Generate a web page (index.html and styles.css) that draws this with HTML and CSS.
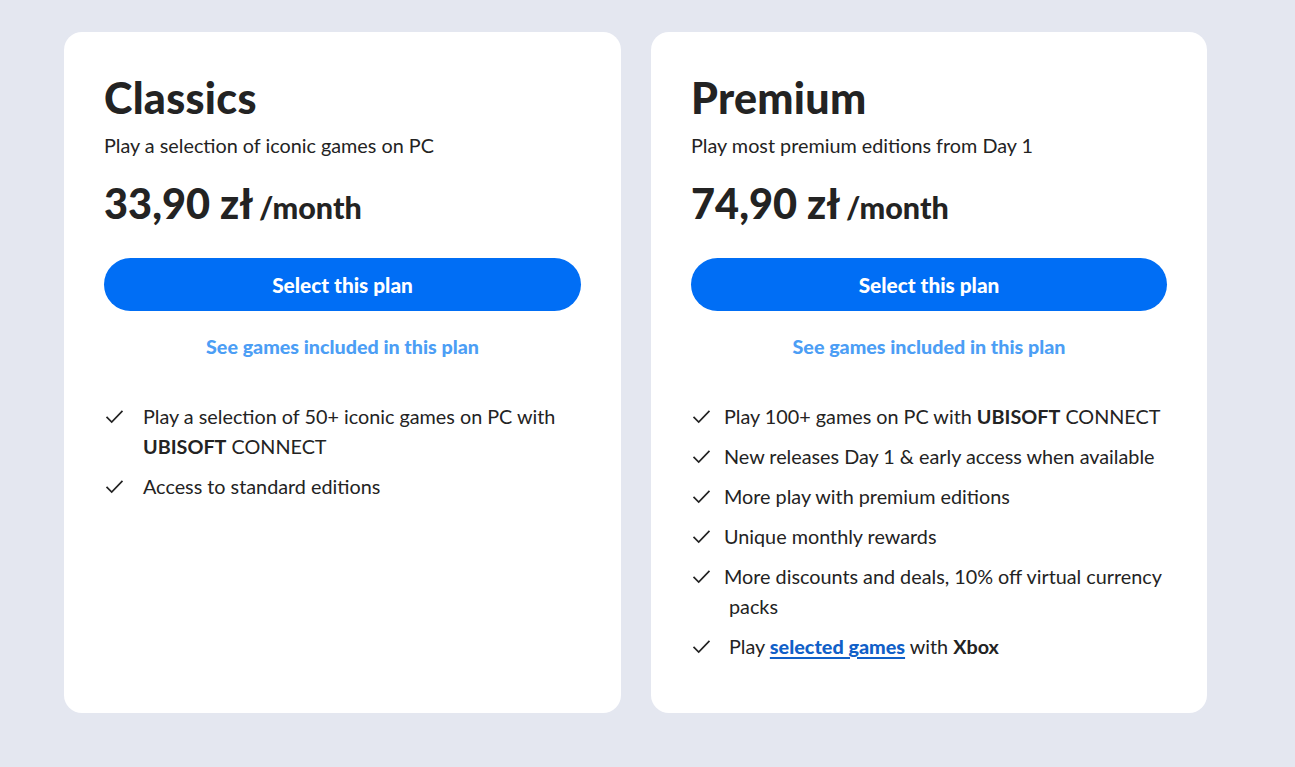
FILE: index.html
```html
<!DOCTYPE html>
<html lang="en">
<head>
<meta charset="utf-8">
<title>Plans</title>
<link rel="stylesheet" href="styles.css">
</head>
<body>
<main class="plans">
  <section class="card">
    <h2 class="title">Classics</h2>
    <p class="subtitle">Play a selection of iconic games on PC</p>
    <p class="price"><span class="amount">33,90 zł</span> <span class="period">/month</span></p>
    <button class="btn">Select this plan</button>
    <a class="games-link" href="#">See games included in this plan</a>
    <ul class="features">
      <li><svg class="check" viewBox="0 0 20 16"><path d="M1.5 8.5 L7 14 L18.5 2"/></svg><span>Play a selection of 50+ iconic games on PC with <b>UBISOFT</b> CONNECT</span></li>
      <li><svg class="check" viewBox="0 0 20 16"><path d="M1.5 8.5 L7 14 L18.5 2"/></svg><span>Access to standard editions</span></li>
    </ul>
  </section>
  <section class="card">
    <h2 class="title">Premium</h2>
    <p class="subtitle">Play most premium editions from Day 1</p>
    <p class="price"><span class="amount">74,90 zł</span> <span class="period">/month</span></p>
    <button class="btn">Select this plan</button>
    <a class="games-link" href="#">See games included in this plan</a>
    <ul class="features features-tight">
      <li><svg class="check" viewBox="0 0 20 16"><path d="M1.5 8.5 L7 14 L18.5 2"/></svg><span>Play 100+ games on PC with <b>UBISOFT</b> CONNECT</span></li>
      <li><svg class="check" viewBox="0 0 20 16"><path d="M1.5 8.5 L7 14 L18.5 2"/></svg><span>New releases Day 1 &amp; early access when available</span></li>
      <li><svg class="check" viewBox="0 0 20 16"><path d="M1.5 8.5 L7 14 L18.5 2"/></svg><span>More play with premium editions</span></li>
      <li><svg class="check" viewBox="0 0 20 16"><path d="M1.5 8.5 L7 14 L18.5 2"/></svg><span>Unique monthly rewards</span></li>
      <li><svg class="check" viewBox="0 0 20 16"><path d="M1.5 8.5 L7 14 L18.5 2"/></svg><span class="hang">More discounts and deals, 10% off virtual currency packs</span></li>
      <li><svg class="check" viewBox="0 0 20 16"><path d="M1.5 8.5 L7 14 L18.5 2"/></svg><span class="shift">Play <a class="inline-link" href="#">selected games</a> with <b>Xbox</b></span></li>
    </ul>
  </section>
</main>
</body>
</html>
```

FILE: styles.css
```css
* { box-sizing: border-box; }
html, body { margin: 0; padding: 0; }
body {
  background: #e4e7f0;
  font-family: "Lato", "Noto Sans", sans-serif;
  color: #232323;
  width: 1295px;
  height: 767px;
  overflow: hidden;
}
.plans {
  display: flex;
  gap: 30px;
  padding: 32px 0 0 64px;
}
.card {
  background: #ffffff;
  border-radius: 18px;
  width: 557px;
  height: 681px;
  padding: 42px 40px 0 40px;
  display: flex;
  flex-direction: column;
}
.card + .card { width: 556px; }
.title {
  margin: 0;
  font-size: 43px;
  line-height: 48px;
  font-weight: 900;
  letter-spacing: 0.3px;
}
.subtitle {
  margin: 10px 0 0 0;
  font-size: 19.8px;
  line-height: 26px;
}
.price {
  margin: 21px 0 0 0;
  font-weight: 900;
  line-height: 48px;
  white-space: nowrap;
}
.amount { font-size: 41.5px; margin-right: 2px; }
.period { font-size: 30.5px; }
.btn {
  margin-top: 21px;
  height: 53px;
  width: 100%;
  border: none;
  border-radius: 27px;
  background: #006ef5;
  color: #fff;
  font-family: inherit;
  font-size: 20.8px;
  font-weight: 900;
}
.games-link {
  margin-top: 23px;
  align-self: center;
  color: #4c9ef5;
  font-size: 19.7px;
  font-weight: 900;
  line-height: 26px;
  text-decoration: none;
}
.features {
  list-style: none;
  margin: 41px 0 0 0;
  padding: 0;
  display: flex;
  flex-direction: column;
  gap: 10px;
}
.features li {
  display: flex;
  align-items: flex-start;
  font-size: 19.8px;
  line-height: 30px;
}
.check {
  flex: none;
  width: 19px;
  height: 15px;
  margin: 8px 19px 0 1px;
  fill: none;
  stroke: #232323;
  stroke-width: 1.8;
}
.features-tight .check { margin-right: 13px; }
.features b { font-weight: 700; }
.hang { padding-left: 5px; text-indent: -5px; }
.shift { padding-left: 5px; }
.inline-link {
  color: #1060c8;
  font-weight: 900;
  text-decoration: underline;
  text-decoration-thickness: 2px;
  text-underline-offset: 3px;
}
```
